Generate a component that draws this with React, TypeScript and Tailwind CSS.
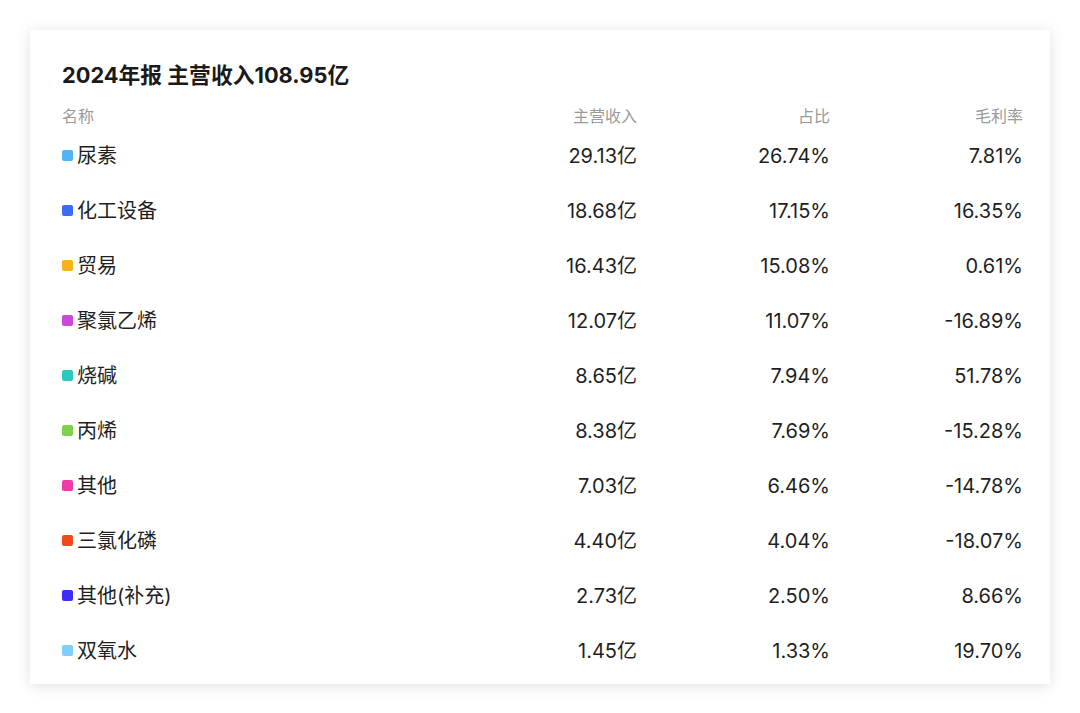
const rows = [
  { name: '尿素', color: 'bg-[#4fb5f7]', revenue: '29.13亿', share: '26.74%', margin: '7.81%' },
  { name: '化工设备', color: 'bg-[#3a6cf4]', revenue: '18.68亿', share: '17.15%', margin: '16.35%' },
  { name: '贸易', color: 'bg-[#f7b21b]', revenue: '16.43亿', share: '15.08%', margin: '0.61%' },
  { name: '聚氯乙烯', color: 'bg-[#c94ad8]', revenue: '12.07亿', share: '11.07%', margin: '-16.89%' },
  { name: '烧碱', color: 'bg-[#2bc8bb]', revenue: '8.65亿', share: '7.94%', margin: '51.78%' },
  { name: '丙烯', color: 'bg-[#7fd04a]', revenue: '8.38亿', share: '7.69%', margin: '-15.28%' },
  { name: '其他', color: 'bg-[#f03ba6]', revenue: '7.03亿', share: '6.46%', margin: '-14.78%' },
  { name: '三氯化磷', color: 'bg-[#f2481e]', revenue: '4.40亿', share: '4.04%', margin: '-18.07%' },
  { name: '其他(补充)', color: 'bg-[#3d2ff2]', revenue: '2.73亿', share: '2.50%', margin: '8.66%' },
  { name: '双氧水', color: 'bg-[#80cffb]', revenue: '1.45亿', share: '1.33%', margin: '19.70%' },
];

const grid = 'grid grid-cols-[375px_200px_193px_193px] items-center';

export default function App() {
  return (
    <div
      className="min-h-[713px] w-[1080px] bg-white pt-[30px] pl-[30px]"
      style={{ fontFamily: 'Inter, "Noto Sans CJK SC", sans-serif' }}
    >
      <div className="w-[1020px] bg-white pt-[31px] pb-[6px] pl-[32px] pr-[27px] shadow-[0_2px_14px_rgba(0,0,0,0.12)]">
        <h2 className="h-[28px] text-[21.8px] leading-[28px] font-bold text-[#1a1a1a]">
          2024年报 主营收入108.95亿
        </h2>
        <div className={`${grid} mt-[15px] h-[24px] text-[16px] text-[#9a9a9a]`}>
          <div>名称</div>
          <div className="text-right">主营收入</div>
          <div className="text-right">占比</div>
          <div className="text-right">毛利率</div>
        </div>
        {rows.map((row) => (
          <div key={row.name} className={`${grid} h-[55px] text-[20px] text-[#1f1f1f]`}>
            <div className="flex items-center">
              <span className={`mr-[4px] h-[11px] w-[11px] rounded-[2px] ${row.color}`} />
              {row.name}
            </div>
            <div className="text-right">{row.revenue}</div>
            <div className="text-right">{row.share}</div>
            <div className="text-right">{row.margin}</div>
          </div>
        ))}
      </div>
    </div>
  );
}
